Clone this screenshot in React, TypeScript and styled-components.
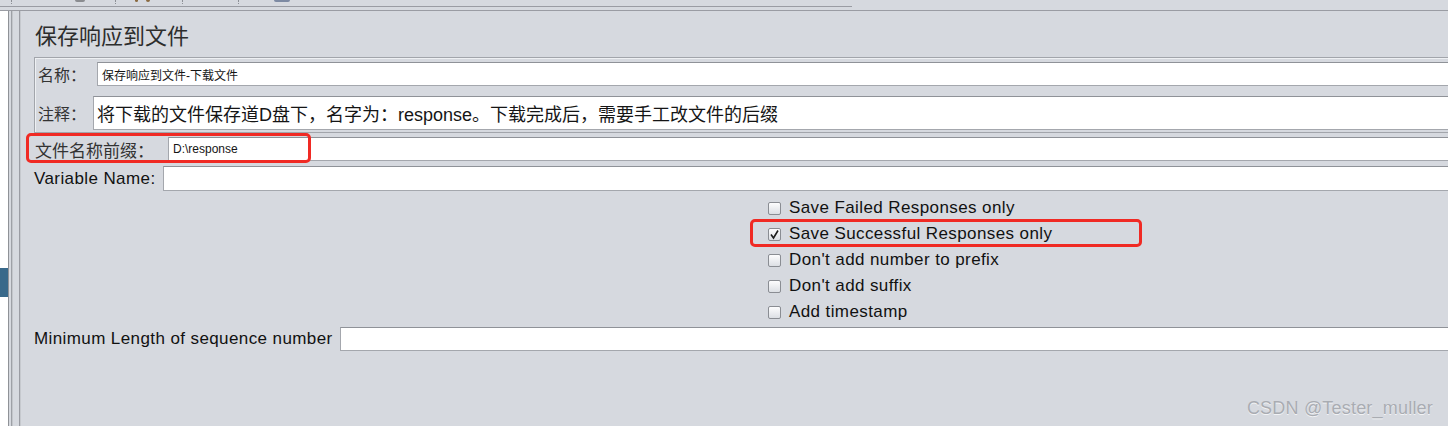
import styled, { createGlobalStyle } from 'styled-components';

const GlobalStyle = createGlobalStyle`
  html, body {
    margin: 0;
    padding: 0;
    height: 100%;
    overflow: hidden;
  }
  body {
    background: #d6d9df;
    font-family: "Liberation Sans", Arial, "Noto Sans CJK SC", sans-serif;
  }
  #root {
    height: 100%;
  }
`

const Frame = styled.div`
  height: 100%;
  display: flex;
  flex-direction: column;
  position: relative;
  overflow: hidden;
`
const Toolbar = styled.div`
  flex: none;
  height: 10px;
`
const ToolbarTrack = styled.div`
  width: 852px;
  height: 6px;
  border-bottom: 1px solid #9a9ca3;
  display: flex;
  align-items: flex-start;
`
const ToolSep = styled.span<{ $at: number }>`
  margin-left: ${p => p.$at}px;
  width: 1px;
  height: 4px;
  border-left: 1px dotted #8d9096;
`
const ToolBit = styled.span<{ $at: number; $w: number; $c: string }>`
  margin-left: ${p => p.$at}px;
  width: ${p => p.$w}px;
  height: 2px;
  border-radius: 0 0 3px 3px;
  background: ${p => p.$c};
`
const Body = styled.div`
  flex: 1;
  display: flex;
  border-top: 1px solid #9a9ca3;
  min-height: 0;
`
const Sidebar = styled.div`
  width: 8px;
  flex: none;
  background: #fff;
  border-right: 1px solid #8f9297;
  display: flex;
  flex-direction: column;
`
const SideItem = styled.div`
  margin-top: 257px;
  height: 29px;
  background: #39698a;
`
const Splitter = styled.div`
  width: 10px;
  flex: none;
  background: linear-gradient(
    to right,
    transparent 2px,
    #9da0a6 2px,
    #9da0a6 3px,
    #c3c6cb 3px,
    #c3c6cb 4px,
    transparent 4px
  );
`
const Main = styled.div`
  flex: 1;
  margin-right: -40px;
  border-left: 1px solid #9a9ca3;
  box-shadow: inset 1px 0 0 #c6c9ce;
  padding: 10px 0 0 14px;
  display: flex;
  flex-direction: column;
`
const Title = styled.h1`
  margin: 0 0 10px 1px;
  font-family: "Noto Sans CJK SC", sans-serif;
  font-weight: 400;
  font-size: 22px;
  line-height: 26px;
  color: #2d2d2d;
`
const NameBox = styled.div`
  border: 1px solid #a2a5ab;
  border-right: none;
  box-shadow: inset 1px 1px 0 #eef0f3;
  padding: 4px 0 2px 3px;
  display: flex;
  flex-direction: column;
  gap: 10px;
`
const Row = styled.div<{ $h: number; $top?: number }>`
  position: relative;
  display: flex;
  align-items: center;
  height: ${p => p.$h}px;
  margin-top: ${p => p.$top ?? 0}px;
`
const CnLabel = styled.span<{ $w: number; $size: number }>`
  flex: none;
  width: ${p => p.$w}px;
  font-family: "Noto Sans CJK SC", sans-serif;
  font-size: ${p => p.$size}px;
  color: #333;
  white-space: nowrap;
`
const Label = styled.span<{ $w?: number }>`
  flex: none;
  width: ${p => (p.$w ? `${p.$w}px` : 'auto')};
  margin-right: ${p => (p.$w ? 0 : 7)}px;
  font-size: 17px;
  letter-spacing: 0.4px;
  color: #111;
  white-space: nowrap;
`
const Field = styled.input<{ $size: number; $pad: number }>`
  flex: 1;
  min-width: 0;
  height: 100%;
  box-sizing: border-box;
  margin: 0;
  padding: 0 0 0 ${p => p.$pad}px;
  border: 1px solid #a4a7ad;
  border-top-color: #8f9298;
  background: #fff;
  outline: none;
  font-family: "Liberation Sans", Arial, "Noto Sans CJK SC", sans-serif;
  font-size: ${p => p.$size}px;
  color: #151515;
`
const Mark = styled.div<{ $l: number; $t: number; $w: number; $h: number }>`
  position: absolute;
  left: ${p => p.$l}px;
  top: ${p => p.$t}px;
  width: ${p => p.$w}px;
  height: ${p => p.$h}px;
  box-sizing: border-box;
  border: 3px solid #f02a24;
  border-radius: 5px;
  pointer-events: none;
`
const Options = styled.div`
  margin: 4px 0 0 734px;
  display: flex;
  flex-direction: column;
`
const Option = styled.label`
  position: relative;
  height: 26px;
  display: flex;
  align-items: center;
  gap: 8px;
  font-size: 17px;
  letter-spacing: 0.4px;
  color: #111;
  white-space: nowrap;
`
const Box = styled.span`
  width: 13px;
  height: 13px;
  box-sizing: border-box;
  border: 1px solid #8a8d93;
  border-radius: 2px;
  background: linear-gradient(#fdfdfe, #dcdfe4);
  display: flex;
  align-items: center;
  justify-content: center;
`
const Watermark = styled.div`
  position: absolute;
  right: 15px;
  bottom: 7px;
  font-size: 18px;
  letter-spacing: 0.2px;
  color: #a9acb2;
  text-shadow: 0 1px 0 rgba(255, 255, 255, 0.7);
`

const options = [
  { text: 'Save Failed Responses only', checked: false },
  { text: 'Save Successful Responses only', checked: true, marked: true },
  { text: "Don't add number to prefix", checked: false },
  { text: "Don't add suffix", checked: false },
  { text: 'Add timestamp', checked: false },
]

function Check({ on }: { on: boolean }) {
  return (
    <Box>
      {on && (
        <svg width="11" height="11" viewBox="0 0 11 11">
          <path d="M2 5.5 L4.5 9 L9 1.5" fill="none" stroke="#1d1d1d" strokeWidth="1.6" />
        </svg>
      )}
    </Box>
  )
}

function App() {
  return (
    <Frame>
      <GlobalStyle />
      <Toolbar>
        <ToolbarTrack>
          <ToolSep $at={11} />
          <ToolBit $at={62} $w={10} $c="#8a8c90" />
          <ToolSep $at={30} />
          <ToolBit $at={18} $w={3} $c="#8a6a40" />
          <ToolBit $at={8} $w={4} $c="#8a6a40" />
          <ToolSep $at={32} />
          <ToolSep $at={54} />
          <ToolBit $at={34} $w={16} $c="#7d8aa3" />
        </ToolbarTrack>
      </Toolbar>
      <Body>
        <Sidebar>
          <SideItem />
        </Sidebar>
        <Splitter />
        <Main>
          <Title>保存响应到文件</Title>
          <NameBox>
            <Row $h={24}>
              <CnLabel $w={59} $size={16}>名称：</CnLabel>
              <Field $size={12} $pad={4} readOnly defaultValue="保存响应到文件-下载文件" />
            </Row>
            <Row $h={34}>
              <CnLabel $w={55} $size={16}>注释：</CnLabel>
              <Field
                $size={18}
                $pad={3}
                readOnly
                defaultValue="将下载的文件保存道D盘下，名字为：response。下载完成后，需要手工改文件的后缀"
              />
            </Row>
          </NameBox>
          <Row $h={24} $top={4}>
            <CnLabel $w={133} $size={17} style={{ paddingLeft: 1 }}>文件名称前缀：</CnLabel>
            <Field $size={12} $pad={4} readOnly defaultValue="D:\response" />
            <Mark $l={-8} $t={-4} $w={285} $h={30} />
          </Row>
          <Row $h={25} $top={5}>
            <Label $w={129}>Variable Name:</Label>
            <Field $size={12} $pad={4} readOnly defaultValue="" />
          </Row>
          <Options>
            {options.map(o => (
              <Option key={o.text}>
                <Check on={o.checked} />
                {o.text}
                {o.marked && <Mark $l={-18} $t={-2} $w={392} $h={28} />}
              </Option>
            ))}
          </Options>
          <Row $h={24} $top={2}>
            <Label>Minimum Length of sequence number</Label>
            <Field $size={12} $pad={4} readOnly defaultValue="" />
          </Row>
        </Main>
      </Body>
      <Watermark>CSDN @Tester_muller</Watermark>
    </Frame>
  )
}

export default App;
